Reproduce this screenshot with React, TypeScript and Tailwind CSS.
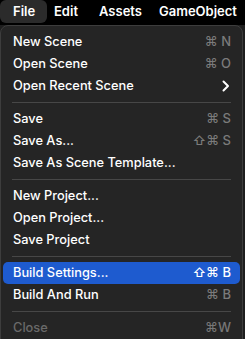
import React from "react";

type Item =
  | { sep: true }
  | { label: string; sc?: string; sub?: boolean; active?: boolean; disabled?: boolean; sep?: false };

const items: Item[] = [
  { label: "New Scene", sc: "⌘ N" },
  { label: "Open Scene", sc: "⌘ O" },
  { label: "Open Recent Scene", sub: true },
  { sep: true },
  { label: "Save", sc: "⌘ S" },
  { label: "Save As...", sc: "⇧⌘ S" },
  { label: "Save As Scene Template..." },
  { sep: true },
  { label: "New Project..." },
  { label: "Open Project..." },
  { label: "Save Project" },
  { sep: true },
  { label: "Build Settings...", sc: "⇧⌘ B", active: true },
  { label: "Build And Run", sc: "⌘ B" },
  { sep: true },
  { label: "Close", sc: "⌘W", disabled: true },
];

export default function App() {
  return (
    <div
      className="w-[245px] h-[339px] bg-[#1e1e1e] overflow-hidden text-white"
      style={{ fontFamily: "Inter, 'DejaVu Sans', sans-serif" }}
    >
      <div className="h-[25px] bg-black flex items-start text-[13px] font-semibold">
        <div className="h-[23px] w-[47px] rounded-[6px] bg-[#2b2b2b] flex items-center pl-[13px]">File</div>
        <div className="h-[23px] w-[45px] flex items-center ml-[7px]">Edit</div>
        <div className="h-[23px] w-[60px] flex items-center">Assets</div>
        <div className="h-[23px] flex items-center">GameObject</div>
      </div>
      <div className="w-[243px] h-[330px] bg-[#252525] border border-[#3d3d3d] rounded-[8px] pt-[5px]">
        {items.map((it, i) =>
          it.sep ? (
            <div key={i} className="h-[11px] flex items-center px-[11px]">
              <div className="h-px w-full bg-[#474747]" />
            </div>
          ) : (
            <div
              key={i}
              className={`h-[22px] mx-[2px] rounded-[5px] flex items-center justify-between pl-[10px] pr-[9px] text-[12.8px] font-medium ${
                it.active ? "bg-[#1e5bcf]" : ""
              } ${it.disabled ? "text-[#6a6a6a]" : "text-white"}`}
            >
              <span>{it.label}</span>
              {it.sc && (
                <span
                  className={`text-[13px] ${it.active ? "text-white" : it.disabled ? "text-[#777]" : "text-[#7b7b7b]"}`}
                >
                  {it.sc}
                </span>
              )}
              {it.sub && (
                <svg width="8" height="12" viewBox="0 0 8 12" className="mr-[1px]">
                  <path d="M1.5 1.5 L6 6 L1.5 10.5" stroke="white" strokeWidth="2" fill="none" strokeLinecap="round" strokeLinejoin="round" />
                </svg>
              )}
            </div>
          )
        )}
      </div>
    </div>
  );
}
